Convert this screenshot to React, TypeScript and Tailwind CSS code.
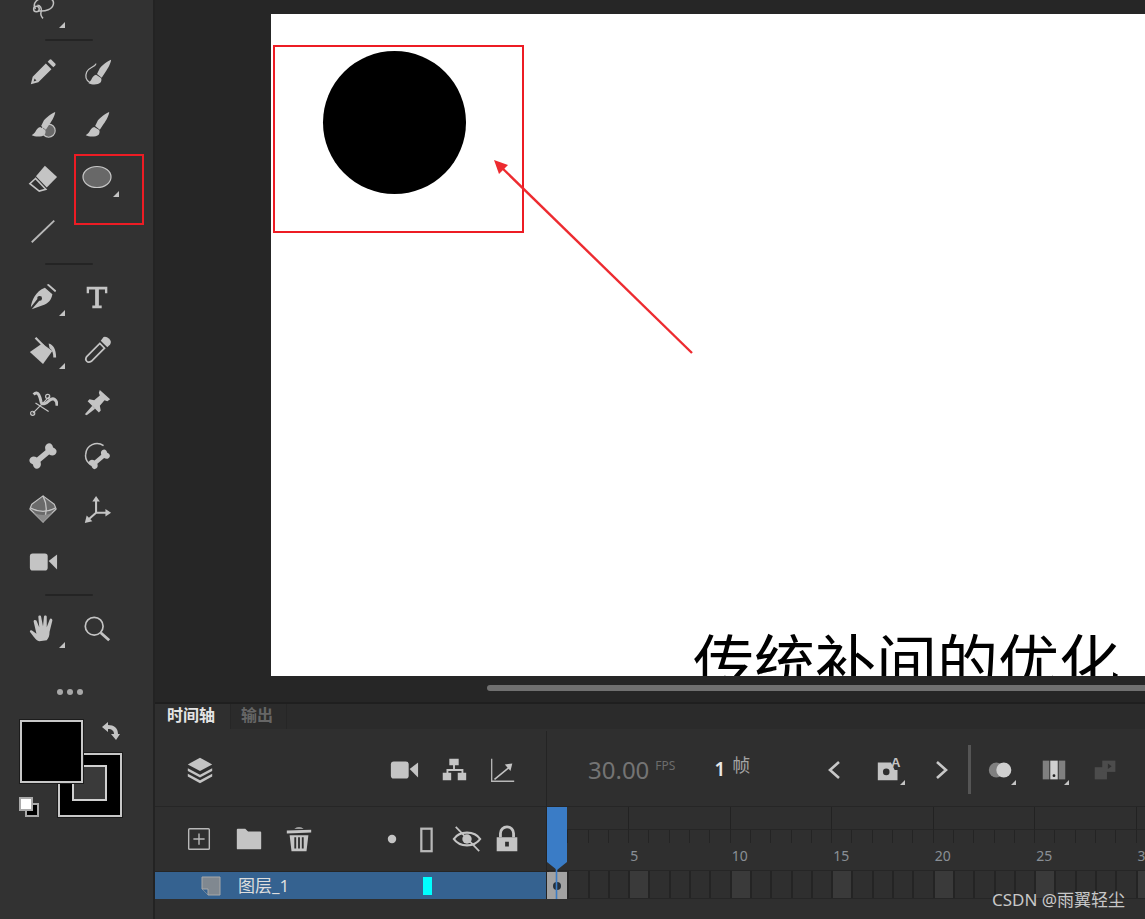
import type { ReactNode } from 'react';

const FONT = 'font-["Noto_Sans","Noto_Sans_CJK_SC",sans-serif]';

function Svg({ children, size = 30 }: { children: ReactNode; size?: number }) {
  return (
    <svg width={size} height={size} viewBox="0 0 32 32" fill="#c4c4c4" className="block shrink-0">
      {children}
    </svg>
  );
}

const BONE = 'M5 9c-4 0-5 4-3 7-2 3-1 7 3 7 3 0 4-2 5-4h12c1 2 2 4 5 4 4 0 5-4 3-7 2-3 1-7-3-7-3 0-4 2-5 4H10c-1-2-2-4-5-4z';

const toolIcons: Record<string, ReactNode> = {
  lasso: (
    <g fill="none" stroke="#c0c0c0" strokeWidth="1.6">
      <path d="M8 16c-4-6 2-12 11-12 6 0 9 3 8 7-1 5-8 8-16 7" />
      <path d="M10 12c3 0 5 3 4 7-1 3 1 6 2 7" />
      <circle cx="9" cy="16" r="3" />
    </g>
  ),
  pencil: (
    <>
      <path d="M3 29l2-8L19 7l6 6-14 14zM7 23l-1 3 3-1z" fillRule="evenodd" />
      <path d="M21 5l2-2q1-1 2 0l4 4q1 1 0 2l-2 2z" />
    </>
  ),
  fluid: (
    <>
      <path d="M31 3c-1 0-8 4-12 9l-3 6 5 4 4-6c3-4 6-10 6-13z" />
      <path d="M15 19c-3 1-4 3-5 5-1 2-3 3-3 4 4 2 10 2 13-1 1-2 1-4 0-5z" />
      <path d="M15 7c-1 4-8 4-10 9-2 5 0 9 3 11" fill="none" stroke="#c4c4c4" strokeWidth="1.3" />
    </>
  ),
  brushBlob: (
    <>
      <circle cx="22" cy="22" r="7" fill="#6a6a6a" stroke="#c4c4c4" strokeWidth="1.2" />
      <path d="M29 2c-1 0-8 4-12 9l-3 6 5 4 4-6c3-4 6-10 6-13z" />
      <path d="M13 18c-3 1-4 3-5 5-1 2-3 3-4 4 4 2 11 2 14-1 1-2 1-4 0-5z" />
    </>
  ),
  brush: (
    <>
      <path d="M29 2c-1 0-8 4-12 9l-3 6 5 4 4-6c3-4 6-10 6-13z" />
      <path d="M13 18c-3 1-4 3-5 5-1 2-3 3-4 4 4 2 11 2 14-1 1-2 1-4 0-5z" />
    </>
  ),
  eraser: (
    <>
      <path d="M18 3l13 12-11 11L8.5 14z" />
      <path d="M8 16.5l-6 5.5 10 8 7-2z" fill="none" stroke="#c4c4c4" strokeWidth="1.7" />
    </>
  ),
  oval: <ellipse cx="16" cy="15" rx="14" ry="10.5" fill="#686868" stroke="#c8c8c8" strokeWidth="1.2" />,
  line: <path d="M4 28L28 5" stroke="#b8b8b8" strokeWidth="2" fill="none" />,
  pen: (
    <>
      <path d="M20 3l2-1 8 7-1 2z" />
      <path d="M18 6l8 7c-1 6-4 10-11 12L4 29l8-9a2.5 2.5 0 10-2-2L3 27c1-8 5-17 15-21z" />
    </>
  ),
  text: <path d="M5 5h22v7h-2.5V8H18v17h3v3H11v-3h3V8H7.5v4H5z" />,
  bucket: (
    <>
      <path d="M2 18L15 9l11 8-10 14z" />
      <path d="M8 3l9 9" stroke="#c4c4c4" strokeWidth="2.4" fill="none" />
      <path d="M22 9c5 1 8 6 8 15h-3c0-5-1-8-4-10z" />
    </>
  ),
  dropper: (
    <>
      <path d="M23 2q3-1 6 2t1 6l-3 3-7-7z" />
      <path d="M19 9l5 5L10 28q-3 2-5 0t0-5z" fill="none" stroke="#c4c4c4" strokeWidth="1.8" />
    </>
  ),
  bind: (
    <g fill="none" stroke="#c4c4c4">
      <path d="M6 7c5-5 7 3 8 8 1 4 6 1 9-2 4-3 8-1 8 6" strokeWidth="3.2" />
      <path d="M5 27L23 9M8 16l14 9" strokeWidth="1.3" />
      <circle cx="5" cy="27" r="2.2" strokeWidth="1.3" />
      <circle cx="21" cy="9" r="2.2" strokeWidth="1.3" />
    </g>
  ),
  pin: (
    <>
      <path d="M19 2l11 10-3 2-3-1-5 6 1 5-2 2-12-12 2-2 5 1 6-5-1-3z" />
      <path d="M11 19l3 3-9 7-2-1z" />
    </>
  ),
  bone: <path d={BONE} transform="rotate(-40 16 16)" />,
  boneRing: (
    <>
      <path d={BONE} transform="translate(6 7) scale(.78) rotate(-40 16 16)" />
      <path d="M23 5A12 12 0 004 14c-1 5 2 10 7 12" fill="none" stroke="#c4c4c4" strokeWidth="1.6" />
    </>
  ),
  sphere: (
    <>
      <path d="M16 2l12 9 2 5-14 14L2 16l2-5z" fill="#6a6a6a" stroke="#c4c4c4" strokeWidth="1.2" strokeLinejoin="round" />
      <path d="M3 15q13 7 26 0" fill="none" stroke="#c4c4c4" strokeWidth="1.4" />
      <path d="M16 2q7 14 0 28" fill="none" stroke="#c4c4c4" strokeWidth="1.4" />
      <path d="M6 20q10 5 20 0l-10 10z" fill="#8a8a8a" />
    </>
  ),
  axis: (
    <>
      <path d="M15 20V7M15 20h13M15 20L6 28" stroke="#c4c4c4" strokeWidth="2.2" fill="none" />
      <path d="M15 2l4 6h-8zM31 20l-6 4v-8zM3 31l2-8 6 6z" />
    </>
  ),
  camera: (
    <>
      <rect x="2" y="7" width="19" height="18" rx="3" />
      <path d="M22 15l9-7v16z" />
    </>
  ),
  hand: <path d="M12 29c-4-1-6-5-10-10 0-2 2-2 3-1l4 3L6 8c0-2 2-2 3-1l3 7-1-11c0-2 3-2 3 0l2 10 1-10c0-2 3-2 3 0v11l3-8c1-2 3-1 3 1l-3 12c0 4-1 7-3 9z" />,
  zoom: (
    <>
      <circle cx="13" cy="13" r="9.5" fill="none" stroke="#c4c4c4" strokeWidth="1.8" />
      <path d="M20 20l9 8" stroke="#c4c4c4" strokeWidth="3" fill="none" />
    </>
  ),
};

function Tool({ name, corner }: { name?: string; corner?: boolean }) {
  return (
    <div className="relative flex h-[53px] w-[54px] items-center justify-center">
      {name && <Svg size={name === 'oval' ? 32 : 30}>{toolIcons[name]}</Svg>}
      {corner && (
        <span className="absolute bottom-[7px] right-[5px] size-0 border-b-[6px] border-l-[6px] border-b-[#c4c4c4] border-l-transparent" />
      )}
    </div>
  );
}

function Divider() {
  return <div className="ml-[45px] h-[2px] w-[48px] rounded bg-[#242424]" />;
}

function Row({ a, b, ac, bc }: { a: string; b?: string; ac?: boolean; bc?: boolean }) {
  return (
    <div className="flex pl-[16px]">
      <Tool name={a} corner={ac} />
      <Tool name={b} corner={bc} />
    </div>
  );
}

function Toolbar() {
  return (
    <aside className="flex w-[155px] shrink-0 flex-col border-r-2 border-[#232323] bg-[#323232]">
      <div className="-mt-[18px]">
        <Row a="lasso" ac />
      </div>
      <div className="flex h-[10px] items-center">
        <Divider />
      </div>
      <Row a="pencil" b="fluid" />
      <Row a="brushBlob" b="brush" />
      <Row a="eraser" b="oval" bc />
      <Row a="line" />
      <div className="flex h-[13px] items-center">
        <Divider />
      </div>
      <Row a="pen" b="text" ac />
      <Row a="bucket" b="dropper" ac />
      <Row a="bind" b="pin" />
      <Row a="bone" b="boneRing" />
      <Row a="sphere" b="axis" />
      <Row a="camera" />
      <div className="flex h-[14px] items-center">
        <Divider />
      </div>
      <Row a="hand" b="zoom" ac />
      <div className="mt-[34px] flex justify-center gap-[4px] pr-[14px]">
        <span className="size-[6px] rounded-full bg-[#a8a8a8]" />
        <span className="size-[6px] rounded-full bg-[#a8a8a8]" />
        <span className="size-[6px] rounded-full bg-[#a8a8a8]" />
      </div>
      <Swatches />
    </aside>
  );
}

function Swatches() {
  return (
    <div className="relative ml-[19px] mt-[25px] h-[98px] w-[104px]">
      <div className="absolute left-[39px] top-[33px] flex h-[64px] w-[64px] items-center justify-center border-2 border-[#c8c8c8] bg-black outline outline-1 outline-[#1c1c1c]">
        <div className="h-[36px] w-[35px] translate-x-[-1px] translate-y-[-2px] border-2 border-[#d0d0d0] bg-[#3a3a3a]" />
      </div>
      <div className="absolute left-[1px] top-0 h-[63px] w-[63px] border-2 border-[#c8c8c8] bg-black outline outline-1 outline-[#1c1c1c]" />
      <div className="absolute left-[82px] top-[1px]">
        <svg width="20" height="20" viewBox="0 0 20 20" fill="#c4c4c4">
          <path d="M1 6l6-5v3c6 0 10 3 10 9h2l-4 6-5-6h3c0-3-2-5-6-5v3z" />
        </svg>
      </div>
      <div className="absolute left-0 top-[77px]">
        <div className="absolute left-[6px] top-[6px] size-[14px] border-2 border-[#aaa] bg-black" />
        <div className="absolute left-0 top-0 size-[14px] border-2 border-[#aaa] bg-white" />
      </div>
    </div>
  );
}

function Stage() {
  return (
    <div className="h-[676px] overflow-hidden bg-[#262626] pl-[116px] pt-[14px]">
      <div className={`relative h-[662px] bg-white ${FONT}`}>
        <div className="absolute left-[52px] top-[37px] size-[143px] rounded-full bg-black" />
        <div className="absolute left-[422px] top-[614px] whitespace-nowrap text-[61px] leading-[70px] text-black">传统补间的优化</div>
      </div>
    </div>
  );
}

function TimelineLeft() {
  return (
    <div className="w-[392px] shrink-0 border-r border-[#242424]">
      <div className="flex h-[76px] items-center border-b border-[#262626] pl-[30px] pt-[2px]">
        <Svg>
          <path d="M16 3l13 7-13 7-13-7z" />
          <path d="M3 14l13 7 13-7v3l-13 7-13-7z" />
          <path d="M3 20l13 7 13-7v3l-13 7-13-7z" />
        </Svg>
        <div className="ml-[174px]">
          <Svg>{toolIcons.camera}</Svg>
        </div>
        <div className="ml-[20px]">
          <Svg>
            <path d="M11 4h10v7h-4v4h9v4h3v8h-9v-8h4v-2H10v2h3v8H4v-8h4v-4h7v-4h-4z" />
          </Svg>
        </div>
        <div className="ml-[18px]">
          <Svg>
            <path d="M5 4v24h24" fill="none" stroke="#b8b8b8" strokeWidth="1.4" />
            <path d="M8 26l16-13" fill="none" stroke="#c4c4c4" strokeWidth="1.6" />
            <path d="M27 9l-8 1 6 7z" />
          </Svg>
        </div>
      </div>
      <div className="flex h-[65px] items-center border-b border-[#262626] pl-[29px]">
        <Svg>
          <rect x="5" y="5" width="22" height="22" rx="1" fill="none" stroke="#b8b8b8" strokeWidth="1.5" />
          <path d="M16 10v12M10 16h12" stroke="#b8b8b8" strokeWidth="1.5" />
        </Svg>
        <div className="ml-[20px]">
          <Svg>
            <path d="M3 6q0-1 1-1h8l3 3h13q1 0 1 1v17q0 1-1 1H4q-1 0-1-1z" />
          </Svg>
        </div>
        <div className="ml-[20px]">
          <Svg>
            <path d="M3 7l26-1v3L3 10zM11 5q5-3 10 0z" />
            <path d="M6 12h20l-2 17H8zM11 14v12h2V14zM15 14v12h2V14zM19 14v12h2V14z" fillRule="evenodd" />
          </Svg>
        </div>
        <div className="ml-[63px]">
          <Svg>
            <circle cx="16" cy="16" r="4.5" />
          </Svg>
        </div>
        <div className="ml-[4px]">
          <Svg>
            <rect x="11" y="5" width="11" height="24" fill="none" stroke="#b8b8b8" strokeWidth="2.4" />
          </Svg>
        </div>
        <div className="ml-[11px]">
          <Svg>
            <path d="M2 16c6-9 22-9 28 0-6 9-22 9-28 0z" fill="none" stroke="#c4c4c4" strokeWidth="2.4" />
            <circle cx="16" cy="16" r="5" />
            <path d="M4 3l25 26" stroke="#c4c4c4" strokeWidth="1.8" />
          </Svg>
        </div>
        <div className="ml-[10px]">
          <Svg>
            <path d="M9 14V10a7 7 0 0114 0v4" fill="none" stroke="#c4c4c4" strokeWidth="3" />
            <path d="M5 14h22v15H5zM14 19v5h4v-5z" fillRule="evenodd" />
          </Svg>
        </div>
      </div>
      <div className="flex h-[27px] items-center bg-[#356290] pl-[46px] text-[#dedede]">
        <svg width="20" height="20" viewBox="0 0 20 20" className="shrink-0">
          <path d="M1 1h18v18H7l-6-6z" fill="#808890" stroke="#a8a8a8" strokeWidth="1" />
          <path d="M1 13h6v6" fill="#356290" stroke="#a8a8a8" strokeWidth="1" />
        </svg>
        <span className="ml-[17px] w-[60px] text-[17px] leading-none">图层_1</span>
        <span className="ml-[125px] h-[18px] w-[9px] bg-[#00ffff]" />
      </div>
    </div>
  );
}

function SmallCorner() {
  return <span className="absolute bottom-0 right-0 size-0 border-b-[5px] border-l-[5px] border-b-[#c4c4c4] border-l-transparent" />;
}

function TimelineControls() {
  return (
    <div className="flex h-[76px] items-center border-b border-[#262626] pl-[41px] pt-[2px]">
      <span className="text-[24px] leading-none text-[#747474]">30.00</span>
      <span className="mb-[8px] ml-[6px] text-[12px] leading-none text-[#6c6c6c]">FPS</span>
      <span className="ml-[39px] text-[19px] font-semibold leading-none text-[#e8e8e8]">1</span>
      <span className="mb-[10px] ml-[7px] text-[18px] leading-none text-[#a4a4a4]">帧</span>
      <div className="ml-[76px]">
        <svg width="16" height="22" viewBox="0 0 16 22" fill="none" stroke="#c8c8c8" strokeWidth="2.6">
          <path d="M13 3L4 11l9 8" />
        </svg>
      </div>
      <div className="relative ml-[33px]">
        <Svg>
          <path d="M3 8h14l4 8h3v11H3z" />
          <circle cx="12" cy="18" r="3.5" fill="#2f2f2f" />
          <text x="17" y="13" fontSize="14" fontWeight="700" fontFamily="Liberation Sans" fill="#c4c4c4">A</text>
        </Svg>
        <SmallCorner />
      </div>
      <div className="ml-[29px]">
        <svg width="16" height="22" viewBox="0 0 16 22" fill="none" stroke="#c8c8c8" strokeWidth="2.6">
          <path d="M3 3l9 8-9 8" />
        </svg>
      </div>
      <div className="ml-[18px] h-[49px] w-[3px] bg-[#555]" />
      <div className="relative ml-[15px]">
        <Svg>
          <circle cx="11" cy="16" r="8" fill="#808080" />
          <circle cx="19" cy="16" r="8" fill="#d0d0d0" />
        </Svg>
        <SmallCorner />
      </div>
      <div className="relative ml-[23px]">
        <Svg>
          <path d="M4 6h7v20H4z" fill="#808080" />
          <path d="M21 6h7v20h-7z" fill="#808080" />
          <path d="M12 6h8v20h-8z" fill="#d0d0d0" />
          <circle cx="16" cy="22" r="1.5" fill="#222" />
        </Svg>
        <SmallCorner />
      </div>
      <div className="relative ml-[22px]">
        <Svg>
          <path d="M4 13h13v13H4z" fill="#4c4c4c" />
          <path d="M12 6h14v12H12z" fill="#4c4c4c" />
          <path d="M18 9l4 3-4 3z" fill="#2f2f2f" />
        </Svg>
      </div>
    </div>
  );
}

function FrameColumn({ n }: { n: number }) {
  const major = n % 5 === 0;
  return (
    <div className="w-[20.3px] shrink-0">
      <div className={`h-[23px] border-b border-[#262626] ${major ? 'border-l' : ''} border-l-[#222]`} />
      <div className="h-[13px] border-l border-[#242424]" />
      <div className="flex h-[28px] items-center border-b border-[#262626] pb-[2px] pl-[2px]">
        {major && <span className="whitespace-nowrap text-[14px] leading-none text-[#8a8f96]">{n}</span>}
      </div>
      <div className="h-[27px] border-l-2 border-[#242424]">
        <div className={`h-full ${major ? 'bg-[#3a3a3a]' : ''}`} />
      </div>
      <div className="h-[1px] bg-[#262626]" />
    </div>
  );
}

function Timeline() {
  const frames = Array.from({ length: 30 }, (_, i) => i + 1);
  return (
    <div className="h-[243px] border-t-2 border-[#1f1f1f] bg-[#2f2f2f]">
      <div className={`flex h-[27px] items-start text-[16px] leading-[22px] ${FONT}`}>
        <div className="h-[27px] w-[75px] bg-[#2f2f2f] pl-[12px] font-semibold text-[#e4e4e4]">时间轴</div>
        <div className="h-[25px] w-[57px] border-x border-[#262626] bg-[#2b2b2b] pl-[10px] font-semibold text-[#666]">输出</div>
        <div className="h-[25px] flex-1 bg-[#2b2b2b]" />
      </div>
      <div className="flex">
        <TimelineLeft />
        <div className="relative min-w-0 flex-1 overflow-hidden">
          <TimelineControls />
          <div className="flex">
            {frames.map(n => (
              <FrameColumn key={n} n={n} />
            ))}
          </div>
          <div className="absolute left-0 top-[141px] flex h-[27px] w-[20px] items-center justify-center bg-[#a2a2a2]">
            <span className="size-[8px] rounded-full bg-[#26303a]" />
          </div>
          <svg width="20" height="112" viewBox="0 0 20 112" className="absolute left-0 top-[76px]">
            <path d="M1 0h19v55l-10 8-10-8V0z" fill="#3a7cc6" />
            <path d="M9.5 60v52" stroke="#3a7cc6" strokeWidth="1.6" />
          </svg>
        </div>
      </div>
    </div>
  );
}

export default function App() {
  return (
    <div className={`relative flex h-[919px] w-[1145px] overflow-hidden bg-[#262626] ${FONT}`}>
      <Toolbar />
      <main className="min-w-0 flex-1">
        <Stage />
        <div className="flex h-[26px] items-center bg-[#262626] pl-[332px]">
          <div className="mb-[2px] h-[6px] flex-1 rounded-l-full bg-[#707070]" />
        </div>
        <Timeline />
      </main>

      {/* red annotations from the screenshot */}
      <div className="absolute left-[74px] top-[154px] h-[71px] w-[70px] border-2 border-[#ed1c24]" />
      <div className="absolute left-[273px] top-[45px] h-[188px] w-[251px] border-2 border-[#ed1c24]" />
      <svg width="230" height="220" viewBox="0 0 230 220" className="absolute left-[480px] top-[150px]">
        <path d="M212 203L18 14" stroke="#ed2b30" strokeWidth="2.4" fill="none" />
        <path d="M14 10l14 5-9 9z" fill="#ed2b30" />
      </svg>

      <div className="absolute left-[992px] top-[889px] whitespace-nowrap text-[17px] leading-[22px] text-[#c8c8c8]">CSDN @雨翼轻尘</div>
    </div>
  );
}
